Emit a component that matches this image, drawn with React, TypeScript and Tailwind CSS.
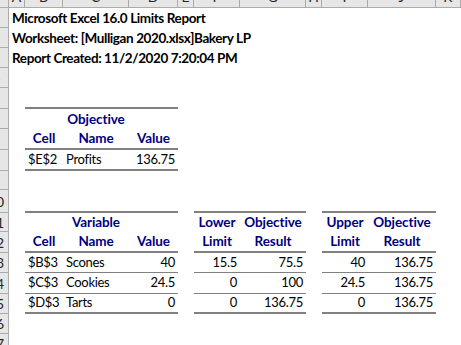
import React from "react";

const W = [
  "w-[16px]",
  "w-[38px]",
  "w-[66px]",
  "w-[49px]",
  "w-[16px]",
  "w-[46px]",
  "w-[66px]",
  "w-[16px]",
  "w-[46px]",
  "w-[68px]",
  "flex-1",
];

type CellSpec = {
  t?: string;
  a?: "l" | "c" | "r";
  h?: boolean; // header (bold navy)
  b?: "b2" | "b1";
};

const LETTERS = ["A", "B", "C", "D", "E", "F", "G", "H", "I", "J", "K"];

function Row({
  n,
  h,
  cells,
  title,
}: {
  n: number;
  h: string;
  cells?: Record<number, CellSpec>;
  title?: string;
}) {
  return (
    <div className={`flex ${h}`}>
      <div className="w-[9px] shrink-0 overflow-hidden border-r border-b border-[#ababab] bg-[#e6e6e6] relative">
        <div className="absolute right-[-1px] top-0 bottom-0 w-[26px] flex items-center justify-center text-[14px] text-[#262626]">
          {n}
        </div>
      </div>
      {title ? (
        <div className="flex-1 flex items-center pl-[3px] font-bold text-[13.5px] tracking-[-0.4px] text-black whitespace-nowrap">
          {title}
        </div>
      ) : (
        W.map((w, i) => {
          const c = cells?.[i];
          const border =
            c?.b === "b2"
              ? "border-b-2 border-[#808080]"
              : c?.b === "b1"
              ? "border-b border-[#808080]"
              : "";
          const align =
            c?.a === "r"
              ? "justify-end pr-[3px]"
              : c?.a === "c"
              ? "justify-center"
              : "justify-start pl-[3px]";
          const txt = c?.h
            ? "font-bold text-[#000080] text-[13.5px] tracking-[-0.1px]"
            : "text-black text-[13px] tracking-[-0.3px]";
          return (
            <div
              key={i}
              className={`${w} shrink-0 flex items-center whitespace-nowrap ${border} ${align} ${txt}`}
            >
              {c?.t}
            </div>
          );
        })
      )}
    </div>
  );
}

export default function App() {
  const B2: CellSpec = { b: "b2" };
  return (
    <div
      className="w-[461px] h-[345px] overflow-hidden bg-white"
      style={{ fontFamily: "Lato, 'Noto Sans', sans-serif" }}
    >
      {/* column header */}
      <div className="flex h-[8px] border-b border-[#ababab] bg-[#e6e6e6] overflow-hidden">
        <div className="w-[9px] shrink-0 border-r border-[#ababab]" />
        {W.map((w, i) => (
          <div
            key={i}
            className={`${w} shrink-0 border-r border-[#ababab] flex justify-center items-start overflow-hidden`}
          >
            <span className="-mt-[10px] leading-[14px] text-[14px] text-[#262626]">
              {LETTERS[i]}
            </span>
          </div>
        ))}
      </div>
      <Row n={1} h="h-[20px]" title="Microsoft Excel 16.0 Limits Report" />
      <Row n={2} h="h-[20px]" title="Worksheet: [Mulligan 2020.xlsx]Bakery LP" />
      <Row n={3} h="h-[20px]" title="Report Created: 11/2/2020 7:20:04 PM" />
      <Row n={4} h="h-[20px]" />
      <Row n={5} h="h-[21px]" cells={{ 1: B2, 2: B2, 3: B2 }} />
      <Row
        n={6}
        h="h-[20px]"
        cells={{ 2: { t: "Objective", a: "c", h: true } }}
      />
      <Row
        n={7}
        h="h-[21px]"
        cells={{
          1: { t: "Cell", a: "c", h: true, b: "b2" },
          2: { t: "Name", a: "c", h: true, b: "b2" },
          3: { t: "Value", a: "c", h: true, b: "b2" },
        }}
      />
      <Row
        n={8}
        h="h-[21px]"
        cells={{
          1: { t: "$E$2", b: "b2" },
          2: { t: "Profits", b: "b2" },
          3: { t: "136.75", a: "r", b: "b2" },
        }}
      />
      <Row n={9} h="h-[19px]" />
      <Row
        n={10}
        h="h-[23px]"
        cells={{ 1: B2, 2: B2, 3: B2, 5: B2, 6: B2, 8: B2, 9: B2 }}
      />
      <Row
        n={11}
        h="h-[19px]"
        cells={{
          2: { t: "Variable", a: "c", h: true },
          5: { t: "Lower", a: "c", h: true },
          6: { t: "Objective", a: "c", h: true },
          8: { t: "Upper", a: "c", h: true },
          9: { t: "Objective", a: "c", h: true },
        }}
      />
      <Row
        n={12}
        h="h-[21px]"
        cells={{
          1: { t: "Cell", a: "c", h: true, b: "b2" },
          2: { t: "Name", a: "c", h: true, b: "b2" },
          3: { t: "Value", a: "c", h: true, b: "b2" },
          5: { t: "Limit", a: "c", h: true, b: "b2" },
          6: { t: "Result", a: "c", h: true, b: "b2" },
          8: { t: "Limit", a: "c", h: true, b: "b2" },
          9: { t: "Result", a: "c", h: true, b: "b2" },
        }}
      />
      <Row
        n={13}
        h="h-[20px]"
        cells={{
          1: { t: "$B$3", b: "b1" },
          2: { t: "Scones", b: "b1" },
          3: { t: "40", a: "r", b: "b1" },
          5: { t: "15.5", a: "r", b: "b1" },
          6: { t: "75.5", a: "r", b: "b1" },
          8: { t: "40", a: "r", b: "b1" },
          9: { t: "136.75", a: "r", b: "b1" },
        }}
      />
      <Row
        n={14}
        h="h-[21px]"
        cells={{
          1: { t: "$C$3", b: "b1" },
          2: { t: "Cookies", b: "b1" },
          3: { t: "24.5", a: "r", b: "b1" },
          5: { t: "0", a: "r", b: "b1" },
          6: { t: "100", a: "r", b: "b1" },
          8: { t: "24.5", a: "r", b: "b1" },
          9: { t: "136.75", a: "r", b: "b1" },
        }}
      />
      <Row
        n={15}
        h="h-[20px]"
        cells={{
          1: { t: "$D$3", b: "b2" },
          2: { t: "Tarts", b: "b2" },
          3: { t: "0", a: "r", b: "b2" },
          5: { t: "0", a: "r", b: "b2" },
          6: { t: "136.75", a: "r", b: "b2" },
          8: { t: "0", a: "r", b: "b2" },
          9: { t: "136.75", a: "r", b: "b2" },
        }}
      />
      <Row n={16} h="h-[20px]" />
      <Row n={17} h="h-[20px]" />
    </div>
  );
}
